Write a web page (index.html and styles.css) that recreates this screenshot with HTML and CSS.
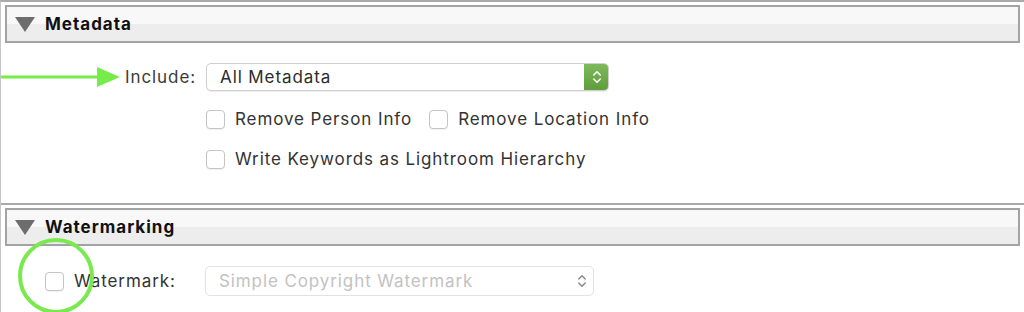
FILE: index.html
```html
<!DOCTYPE html>
<html>
<head>
<meta charset="utf-8">
<link rel="stylesheet" href="styles.css">
</head>
<body>
<div class="panel">
  <section class="section">
    <div class="header">
      <span class="tri"></span>
      <span class="title">Metadata</span>
    </div>
    <div class="body meta-body">
      <div class="row include-row">
        <span class="label">Include:</span>
        <div class="select">
          <span class="select-text">All Metadata</span>
          <span class="stepper">
            <svg width="10" height="18" viewBox="0 0 10 18"><path d="M1.8 7 L5 3.8 L8.2 7 M1.8 11 L5 14.2 L8.2 11" fill="none" stroke="#fff" stroke-width="1.6" stroke-linecap="round" stroke-linejoin="round"/></svg>
          </span>
        </div>
      </div>
      <div class="row checks-row">
        <label class="check"><span class="box"></span><span>Remove Person Info</span></label>
        <label class="check"><span class="box"></span><span>Remove Location Info</span></label>
      </div>
      <div class="row checks-row second">
        <label class="check"><span class="box"></span><span>Write Keywords as Lightroom Hierarchy</span></label>
      </div>
    </div>
  </section>
  <section class="section wm">
    <div class="header">
      <span class="tri"></span>
      <span class="title">Watermarking</span>
    </div>
    <div class="body">
      <div class="row wm-row">
        <span class="box"></span>
        <span class="wm-label">Watermark:</span>
        <div class="select disabled">
          <span class="select-text">Simple Copyright Watermark</span>
          <svg class="chev" width="10" height="18" viewBox="0 0 10 18"><path d="M1.8 7 L5 3.8 L8.2 7 M1.8 11 L5 14.2 L8.2 11" fill="none" stroke="#8a8a8a" stroke-width="1.5" stroke-linecap="round" stroke-linejoin="round"/></svg>
        </div>
      </div>
    </div>
  </section>
  <svg class="arrow" width="120" height="22" viewBox="0 0 120 22"><line x1="0" y1="11" x2="100" y2="11" stroke="#76ec4b" stroke-width="3"/><polygon points="96,1 119,11 96,21" fill="#76ec4b"/></svg>
  <span class="circle"></span>
</div>
</body>
</html>
```

FILE: styles.css
```css
* { box-sizing: border-box; }
html, body { margin: 0; padding: 0; background: #fff; }
body {
  width: 1024px;
  height: 312px;
  overflow: hidden;
  font-family: "Inter", "Liberation Sans", sans-serif;
  color: #333;
}
.panel {
  position: relative;
  height: 312px;
  border-top: 2px solid #a9a9a9;
  border-left: 1px solid #c6c6c6;
}
.section {
  padding: 3px 4px 0 4px;
}
.section.wm {
  border-top: 2px solid #a9a9a9;
}
.header {
  height: 38px;
  border: 2px solid #a3a3a3;
  background: linear-gradient(#f8f8f8 0, #f8f8f8 50%, #ededed 50%, #ededed 100%);
  display: flex;
  align-items: center;
  padding-left: 8px;
}
.tri {
  width: 0; height: 0;
  border-left: 10px solid transparent;
  border-right: 10px solid transparent;
  border-top: 15px solid #6d6d6d;
  margin-right: 10px;
  margin-top: 1px;
}
.title {
  font-weight: 700;
  font-size: 17px;
  color: #111;
  letter-spacing: 1px;
}
.body { font-size: 17px; letter-spacing: 0.9px; }
.meta-body { height: 160px; padding-top: 20px; }
.row { display: flex; align-items: center; }
.include-row { margin-left: -5px; }
.label { width: 206px; text-align: right; padding-right: 10px; color: #3a3a3a; }
.select {
  width: 403px;
  height: 28px;
  border: 1px solid #cfcfcf;
  border-radius: 5px;
  background: #fff;
  box-shadow: 0 1px 1px rgba(0,0,0,0.08);
  display: flex;
  align-items: center;
  padding-left: 13px;
  position: relative;
  overflow: hidden;
}
.select-text { flex: 1; color: #2c2c2c; }
.stepper {
  width: 25px;
  height: 28px;
  margin-top: -1px; margin-bottom: -1px; margin-right: -1px;
  background: linear-gradient(#7fbb5c, #5c9c3d);
  border-radius: 0 5px 5px 0;
  display: flex; align-items: center; justify-content: center;
}
.checks-row { padding-left: 201px; margin-top: 18px; }
.checks-row.second { margin-top: 20px; }
.check { display: flex; align-items: center; margin-right: 17px; }
.box {
  width: 19px; height: 19px;
  border: 1px solid #c4c4c4;
  border-radius: 4px;
  background: #fff;
  box-shadow: 0 1px 1px rgba(0,0,0,0.06);
  margin-right: 10px;
  flex: none;
}
.wm .body { padding-top: 20px; }
.wm-row { padding-left: 40px; }
.wm-label { width: 131px; color: #333; }
.select.disabled {
  width: 389px;
  height: 30px;
  border-color: #e2e2e2;
  box-shadow: none;
  padding-right: 6px;
}
.select.disabled .select-text { color: #c2c2c2; }
.arrow { position: absolute; left: 0; top: 64px; }
.circle {
  position: absolute;
  left: 17px; top: 236px;
  width: 76px; height: 76px;
  border: 4px solid #7ae84f;
  border-radius: 50%;
}
```
